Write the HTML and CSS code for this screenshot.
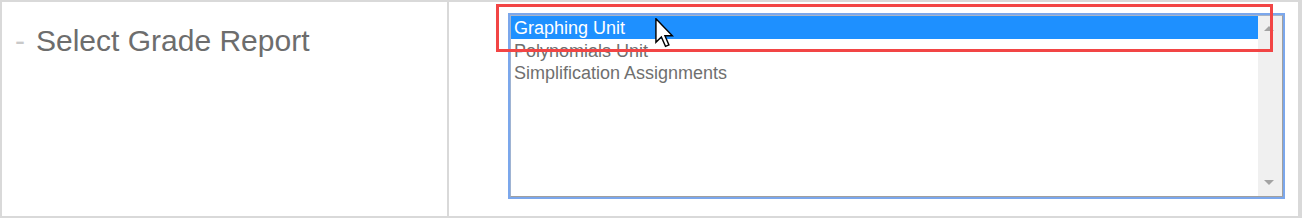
FILE: index.html
```html
<!DOCTYPE html>
<html lang="en">
<head>
<meta charset="utf-8">
<title>Select Grade Report</title>
<link rel="stylesheet" href="styles.css">
</head>
<body>
<div class="frame">
  <div class="label-cell">
    <h2 class="title"><span class="dash">-</span>Select Grade Report</h2>
  </div>
  <div class="select-cell">
    <div class="listbox">
      <ul class="options">
        <li class="option selected">Graphing Unit</li>
        <li class="option">Polynomials Unit</li>
        <li class="option">Simplification Assignments</li>
      </ul>
      <div class="scrollbar">
        <span class="arrow up"></span>
        <span class="arrow down"></span>
      </div>
    </div>
  </div>
  <div class="highlight"></div>
  <svg class="cursor" viewBox="0 0 13 21" width="19" height="30" aria-hidden="true">
    <polygon points="0.5,0.5 0.5,17 4.3,13.3 7.2,19.8 9.6,18.8 6.8,12.4 12,12.4" fill="#fff" stroke="#000" stroke-width="1" stroke-linejoin="miter"/>
  </svg>
</div>
</body>
</html>
```

FILE: styles.css
```css
* { box-sizing: border-box; }

html, body {
  margin: 0;
  padding: 0;
  background: #fff;
}

body {
  font-family: "Liberation Sans", Arial, sans-serif;
}

.frame {
  position: relative;
  display: flex;
  width: 1302px;
  height: 218px;
  border-top: 2px solid #d9d9d9;
  border-left: 2px solid #d9d9d9;
  border-bottom: 2px solid #d9d9d9;
  border-right: 4px solid #d9d9d9;
  background: #fff;
}

.label-cell {
  width: 447px;
  flex: none;
  border-right: 2px solid #d9d9d9;
}

.title {
  margin: 0;
  padding: 22px 0 0 13px;
  font-size: 30px;
  font-weight: normal;
  line-height: 34px;
  color: #6d6d6d;
  white-space: nowrap;
}

.dash {
  color: #c9c9c9;
  margin-right: 11px;
}

.select-cell {
  flex: 1;
  padding: 11px 0 0 59px;
}

.listbox {
  display: flex;
  width: 777px;
  height: 186px;
  border: 2px solid #7ba7ec;
}

.options {
  flex: 1;
  margin: 0;
  padding: 0;
  list-style: none;
  border-top: 1px solid #a8b4c6;
  border-left: 1px solid #9fb3d2;
  border-bottom: 1px solid #a0a0a0;
  font-size: 18px;
  color: #6f6f6f;
}

.option {
  padding: 2px 3px 0;
  line-height: 20.5px;
  white-space: nowrap;
}

.option.selected {
  background: #1e90ff;
  color: #fff;
}

.scrollbar {
  position: relative;
  width: 25px;
  flex: none;
  background: #f0f0f0;
  border-top: 1px solid #a8b4c6;
  border-right: 1px solid #a0a0a0;
  border-bottom: 1px solid #a0a0a0;
}

.arrow {
  position: absolute;
  left: 6px;
  width: 0;
  height: 0;
  border-left: 5px solid transparent;
  border-right: 5px solid transparent;
}

.arrow.up {
  top: 10px;
  border-bottom: 5px solid #a3a3a3;
}

.arrow.down {
  bottom: 11px;
  border-top: 5px solid #a3a3a3;
}

.highlight {
  position: absolute;
  left: 494px;
  top: 2px;
  width: 777px;
  height: 48px;
  border: 3px solid #f24545;
  pointer-events: none;
}

.cursor {
  position: absolute;
  left: 653px;
  top: 16px;
}
```
